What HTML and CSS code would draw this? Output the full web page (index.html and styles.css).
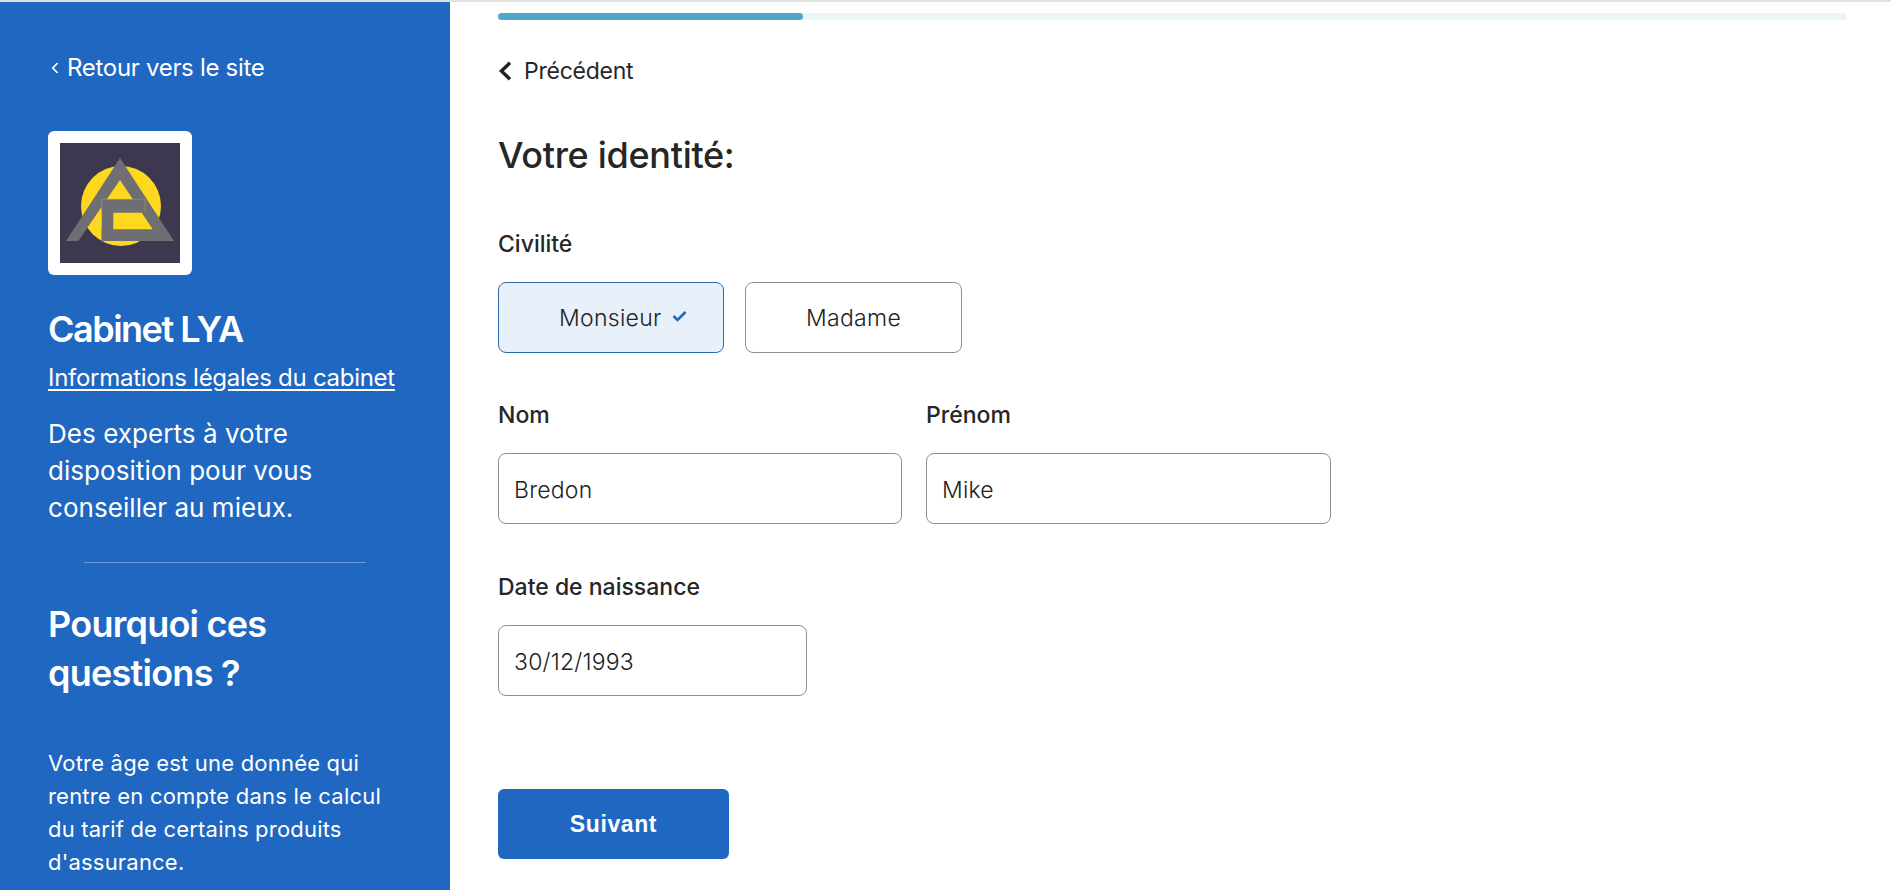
FILE: index.html
```html
<!DOCTYPE html>
<html lang="fr">
<head>
<meta charset="utf-8">
<title>Votre identité</title>
<link rel="stylesheet" href="styles.css">
</head>
<body>
<div class="page">
  <aside class="sidebar">
    <a class="back-site" href="#"><svg class="back-site-icon" viewBox="0 0 8 14"><path d="M6.6 2 1.8 7l4.8 5" fill="none" stroke="#fff" stroke-width="1.7"/></svg>Retour vers le site</a>
    <div class="logo-card">
      <svg class="logo" viewBox="0 0 120 120">
        <rect width="120" height="120" fill="#3d3850"/>
        <circle cx="61" cy="63" r="40" fill="#fdd81e"/>
        <path d="M60 15 114 98H41.7V86.3H92.7L60 37 18.3 98H6Z" fill="#6f6f73"/>
        <path d="M41.7 56.3H85V69.7H53.3V98H41.7Z" fill="#6f6f73"/>
        <path d="M41.7 69V56.3H85V69.7" fill="none" stroke="#a09a5c" stroke-width=".6"/>
      </svg>
    </div>
    <h2 class="cabinet">Cabinet LYA</h2>
    <a class="legal" href="#">Informations légales du cabinet</a>
    <p class="tagline">Des experts à votre disposition pour vous conseiller au mieux.</p>
    <hr class="divider">
    <h2 class="why">Pourquoi ces questions ?</h2>
    <p class="why-text">Votre âge est une donnée qui rentre en compte dans le calcul du tarif de certains produits d'assurance.</p>
  </aside>
  <main class="main">
    <div class="progress"><div class="progress-fill"></div></div>
    <a class="prev" href="#"><svg class="prev-icon" viewBox="0 0 14 20"><path d="M12 1.8 3.4 10l8.6 8.2" fill="none" stroke="#222" stroke-width="3.4"/></svg>Précédent</a>
    <h1 class="title">Votre identité:</h1>
    <div class="label civ-label">Civilité</div>
    <div class="choices">
      <button class="choice choice-on" type="button">Monsieur<svg class="check" viewBox="0 0 15 12"><path d="M1.5 6 5.5 10 13.5 2" fill="none" stroke="#1f67c0" stroke-width="2.6"/></svg></button>
      <button class="choice choice-off" type="button">Madame</button>
    </div>
    <div class="name-row">
      <div class="field name-field">
        <label class="label">Nom</label>
        <input class="input input-name" type="text" value="Bredon">
      </div>
      <div class="field name-field">
        <label class="label">Prénom</label>
        <input class="input input-name input-first" type="text" value="Mike">
      </div>
    </div>
    <div class="field date-field">
      <label class="label">Date de naissance</label>
      <input class="input input-date" type="text" value="30/12/1993">
    </div>
    <button class="next" type="button">Suivant</button>
  </main>
</div>
</body>
</html>
```
FILE: styles.css
```css
* { box-sizing: border-box; }
html, body { margin: 0; height: 100%; overflow: hidden; background: #fff; }
body { font-family: Inter, "Noto Sans", sans-serif; color: #262626; }
.page { display: flex; height: 890px; border-top: 2px solid #dfe2df; }

.sidebar { width: 450px; flex: none; background: #1f67c0; color: #fff; padding: 49px 48px 0; overflow: hidden; }
.back-site { display: flex; align-items: center; height: 33px; color: #fff; text-decoration: none; font-size: 24px; letter-spacing: -.3px; font-weight: 400; }
.back-site-icon { width: 8px; height: 14px; margin: 1px 8px 0 3px; flex: none; }
.logo-card { width: 144px; height: 144px; margin-top: 47px; padding: 12px; background: #fff; border-radius: 6px; }
.logo { display: block; width: 120px; height: 120px; }
.cabinet { margin: 32px 0 0; font-size: 36px; line-height: 44px; font-weight: 600; letter-spacing: -1.5px; }
.legal { display: block; margin-top: 10px; color: #fff; font-size: 24px; line-height: 33px; letter-spacing: -.28px; text-decoration: underline; text-underline-offset: 3px; white-space: nowrap; }
.tagline { margin: 21px 0 0; font-size: 26px; line-height: 37px; letter-spacing: .05px; }
.divider { margin: 36px 36px 0; height: 1px; border: 0; background: #6b9be0; }
.why { margin: 37px 0 0; font-size: 36px; line-height: 49px; font-weight: 600; letter-spacing: -.75px; }
.why-text { margin: 49px 0 0; font-size: 22px; line-height: 33px; letter-spacing: .2px; }

.main { flex: 1; min-width: 0; padding: 11px 44px 0 48px; }
.progress { height: 7px; background: #e8f6f6; border-radius: 4px; }
.progress-fill { width: 305px; height: 7px; background: #4fa8cc; border-radius: 4px; }
.prev { display: flex; align-items: center; height: 28px; margin-top: 37px; color: #262626; text-decoration: none; font-size: 23px; letter-spacing: -.25px; font-weight: 400; }
.prev-icon { width: 14px; height: 20px; margin-right: 12px; flex: none; }
.title { margin: 45px 0 0; font-size: 36px; line-height: 50px; font-weight: 500; letter-spacing: -.3px; }
.label { display: block; font-size: 23px; line-height: 30px; font-weight: 500; letter-spacing: 0; }
.civ-label { margin-top: 49px; }
.choices { display: flex; gap: 21px; margin-top: 23px; }
.choice { display: flex; align-items: center; height: 71px; padding-top: 2px; font: 300 23px Inter, sans-serif; letter-spacing: .3px; color: #222; border-radius: 8px; background: #fff; border: 1px solid #909090; }
.choice-on { width: 226px; padding-left: 60px; background: #e8f0fa; border-color: #2a6aa8; }
.choice-off { width: 217px; justify-content: center; }
.check { width: 15px; height: 12px; margin: -4px 0 0 10px; flex: none; }
.name-row { display: flex; gap: 24px; margin-top: 47px; }
.field { display: flex; flex-direction: column; gap: 23px; }
.input { height: 71px; padding: 2px 15px 0; font: 300 23px Inter, sans-serif; letter-spacing: .2px; color: #222; border: 1px solid #909090; border-radius: 8px; background: #fff; outline: 0; }
.input-name { width: 404px; }
.input-first { width: 405px; }
.date-field { margin-top: 48px; }
.input-date { width: 309px; }
.next { display: block; width: 231px; height: 70px; margin-top: 93px; border: 0; border-radius: 6px; background: #1f67c0; color: #fff; font: 700 23px "Liberation Sans", Arial, sans-serif; letter-spacing: .6px; }
```
